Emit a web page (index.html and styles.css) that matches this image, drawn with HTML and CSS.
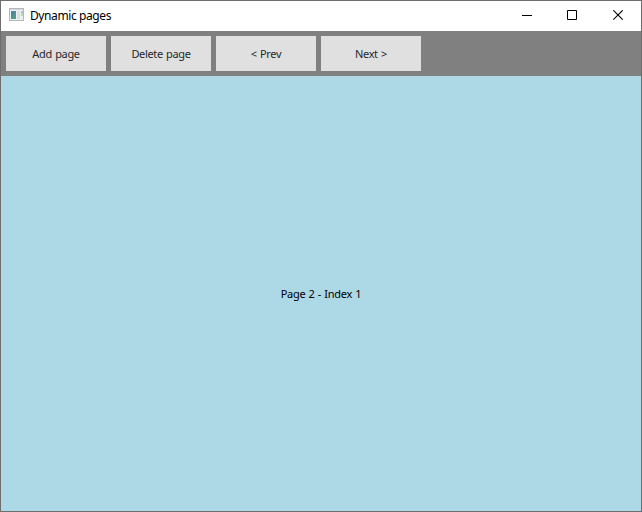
FILE: index.html
```html
<!DOCTYPE html>
<html lang="en">
<head>
<meta charset="utf-8">
<title>Dynamic pages</title>
<link rel="stylesheet" href="styles.css">
</head>
<body>
<div class="window">
  <header class="titlebar">
    <svg class="app-icon" width="15" height="13" viewBox="0 0 15 13" shape-rendering="crispEdges">
      <defs><linearGradient id="pane" x1="0" y1="0" x2="1" y2="1"><stop offset="0" stop-color="#4a7db0"/><stop offset="1" stop-color="#4ea77c"/></linearGradient></defs>
      <rect width="15" height="13" fill="#b4b7ba"/>
      <rect x="1" y="1" width="13" height="1" fill="#d3d8de"/>
      <rect x="1" y="2" width="13" height="10" fill="#eef0f1"/>
      <rect x="2" y="3" width="5" height="8" fill="url(#pane)"/>
      <rect x="8" y="3" width="3" height="8" fill="#dcdfe0"/>
      <rect x="12" y="3" width="2" height="2" fill="#a8c4dc"/>
      <rect x="12" y="5" width="2" height="3" fill="#b4dbb5"/>
    </svg>
    <span class="title">Dynamic pages</span>
    <div class="controls">
      <svg class="control" width="11" height="11" viewBox="0 0 11 11"><path d="M0 5.5H10" stroke="#000"/></svg>
      <svg class="control" width="11" height="11" viewBox="0 0 11 11"><path d="M.5 .5H9.5V9.5H.5Z" fill="none" stroke="#000"/></svg>
      <svg class="control" width="11" height="11" viewBox="0 0 11 11"><path d="M.3 .3L9.7 9.7M9.7 .3L.3 9.7" stroke="#000" stroke-width="1.1"/></svg>
    </div>
  </header>
  <nav class="toolbar">
    <button class="button"><span>Add page</span></button>
    <button class="button"><span>Delete page</span></button>
    <button class="button"><span>&lt; Prev</span></button>
    <button class="button"><span>Next &gt;</span></button>
  </nav>
  <main class="page"><span>Page 2 - Index 1</span></main>
</div>
</body>
</html>
```
FILE: styles.css
```css
* { box-sizing: border-box; }
body { margin: 0; }
.window {
  width: 642px;
  height: 512px;
  border: 1px solid #6e6e6e;
  display: flex;
  flex-direction: column;
  font-family: "Noto Sans", "Open Sans", sans-serif;
  font-size: 11px;
  color: #000;
}
.titlebar {
  height: 30px;
  background: #fff;
  display: flex;
  align-items: flex-start;
  padding: 7px 17px 0 8px;
}
.app-icon { margin-right: 6px; }
.title { font-size: 12px; line-height: 16px; letter-spacing: -0.4px; white-space: nowrap; }
.controls { margin: 2px 0 0 auto; display: flex; gap: 34px; }
.control { display: block; }
.control:last-child { margin-left: 1px; }
.toolbar {
  height: 45px;
  background: #808080;
  padding: 5px;
  display: flex;
  gap: 5px;
}
.button {
  width: 100px;
  height: 35px;
  border: 0;
  padding: 0;
  background: #e0e0e0;
  color: #26282a;
  font: inherit;
  letter-spacing: -0.35px;
  word-spacing: 0.8px;
}
.page {
  flex: 1;
  background: #add8e6;
  display: flex;
  align-items: center;
  justify-content: center;
  letter-spacing: -0.3px;
  word-spacing: 0.7px;
}
```
